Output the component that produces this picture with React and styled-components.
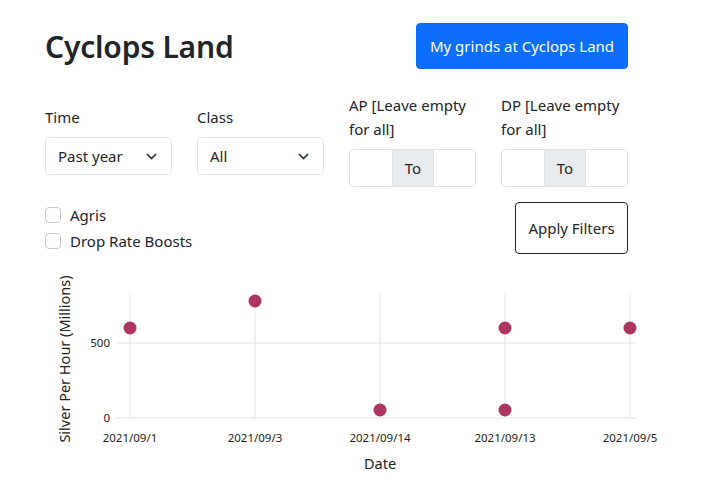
import React from 'react'
import styled, { createGlobalStyle } from 'styled-components'

const GlobalStyle = createGlobalStyle`
  body {
    margin: 0;
    background: #fff;
    color: #212529;
    font-family: "Noto Sans", "Open Sans", sans-serif;
  }
`

const Page = styled.div`
  width: 583px;
  padding: 23px 0 0 45px;
`

const Header = styled.div`
  display: flex;
  justify-content: space-between;
  align-items: center;
`

const Title = styled.h1`
  margin: 0;
  font-size: 30px;
  font-weight: 600;
  letter-spacing: -0.2px;
`

const Button = styled.button`
  font-family: inherit;
  font-size: 15px;
  border-radius: 4px;
  cursor: pointer;
  background: ${p => (p.$primary ? '#0d6efd' : '#fff')};
  color: ${p => (p.$primary ? '#fff' : '#212529')};
  border: 1px solid ${p => (p.$primary ? '#0d6efd' : '#212529')};
  width: ${p => p.$w}px;
  height: ${p => p.$h}px;
  padding: 0;
`

const Filters = styled.div`
  display: grid;
  grid-template-columns: repeat(4, 127px);
  column-gap: 25px;
  align-items: center;
  margin-top: 24px;
`

const Field = styled.div`
  display: flex;
  flex-direction: column;
`

const Label = styled.label`
  font-size: 15px;
  line-height: 24px;
  margin-bottom: 8px;
`

const SelectBox = styled.div`
  height: 38px;
  box-sizing: border-box;
  border: 1px solid #dee2e6;
  border-radius: 5px;
  display: flex;
  align-items: center;
  justify-content: space-between;
  padding: 0 14px 0 12px;
  font-size: 15px;
`

const InputGroup = styled.div`
  display: grid;
  grid-template-columns: 42px 42px 1fr;
  height: 38px;
  box-sizing: border-box;
  border: 1px solid #dee2e6;
  border-radius: 5px;
  overflow: hidden;
`

const Addon = styled.div`
  background: #e9ecef;
  border-left: 1px solid #dee2e6;
  border-right: 1px solid #dee2e6;
  display: flex;
  align-items: center;
  justify-content: center;
  font-size: 15px;
`

const OptionsRow = styled.div`
  display: flex;
  justify-content: space-between;
  align-items: center;
  margin-top: 15px;
`

const Checks = styled.div`
  display: flex;
  flex-direction: column;
  gap: 2px;
`

const CheckRow = styled.label`
  display: flex;
  align-items: center;
  gap: 9px;
  font-size: 15px;
  line-height: 24px;
`

const Box = styled.span`
  width: 16px;
  height: 16px;
  box-sizing: border-box;
  border: 1px solid #c8ccd0;
  border-radius: 4px;
`

const Chart = styled.svg`
  display: block;
  margin-top: 9px;
  margin-left: -45px;
  font-family: "Noto Sans", sans-serif;
`

const Chevron = () => (
  <svg width="11" height="11" viewBox="0 0 16 16">
    <path d="M2 5l6 6 6-6" fill="none" stroke="#343a40" strokeWidth="2.4" strokeLinecap="round" strokeLinejoin="round" />
  </svg>
)

const xs = [130, 255, 380, 505, 630]
const labels = ['2021/09/1', '2021/09/3', '2021/09/14', '2021/09/13', '2021/09/5']
const points = [[130, 327], [255, 300], [380, 409], [505, 327], [505, 409], [630, 327]]
const OY = 262

const App = () => (
  <>
    <GlobalStyle />
    <Page>
      <Header>
        <Title>Cyclops Land</Title>
        <Button $primary $w={212} $h={46}>My grinds at Cyclops Land</Button>
      </Header>

      <Filters>
        <Field>
          <Label>Time</Label>
          <SelectBox>Past year <Chevron /></SelectBox>
        </Field>
        <Field>
          <Label>Class</Label>
          <SelectBox>All <Chevron /></SelectBox>
        </Field>
        <Field>
          <Label>AP [Leave empty<br />for all]</Label>
          <InputGroup><span /><Addon>To</Addon><span /></InputGroup>
        </Field>
        <Field>
          <Label>DP [Leave empty<br />for all]</Label>
          <InputGroup><span /><Addon>To</Addon><span /></InputGroup>
        </Field>
      </Filters>

      <OptionsRow>
        <Checks>
          <CheckRow><Box />Agris</CheckRow>
          <CheckRow><Box />Drop Rate Boosts</CheckRow>
        </Checks>
        <Button $w={113} $h={52}>Apply Filters</Button>
      </OptionsRow>

      <Chart width="680" height="220" viewBox={`0 ${OY} 680 220`}>
        {xs.map(x => (
          <line key={x} x1={x} x2={x} y1={293} y2={417} stroke="#e2e2e2" />
        ))}
        <line x1={117} x2={636} y1={342} y2={342} stroke="#e2e2e2" />
        <line x1={117} x2={636} y1={417} y2={417} stroke="#e2e2e2" />
        <text x={110} y={346} fontSize="11.5" textAnchor="end" fill="#222">500</text>
        <text x={110} y={421} fontSize="11.5" textAnchor="end" fill="#222">0</text>
        {xs.map((x, i) => (
          <text key={x} x={x} y={441} fontSize="11.5" textAnchor="middle" fill="#222">{labels[i]}</text>
        ))}
        <text x={380} y={468} fontSize="14.5" textAnchor="middle" fill="#222">Date</text>
        <text x={0} y={0} fontSize="14.5" textAnchor="middle" fill="#222" transform="translate(70 358) rotate(-90)">Silver Per Hour (Millions)</text>
        {points.map(([x, y], i) => (
          <circle key={i} cx={x} cy={y} r={6.5} fill="#ad3560" />
        ))}
      </Chart>
    </Page>
  </>
)

export default App
